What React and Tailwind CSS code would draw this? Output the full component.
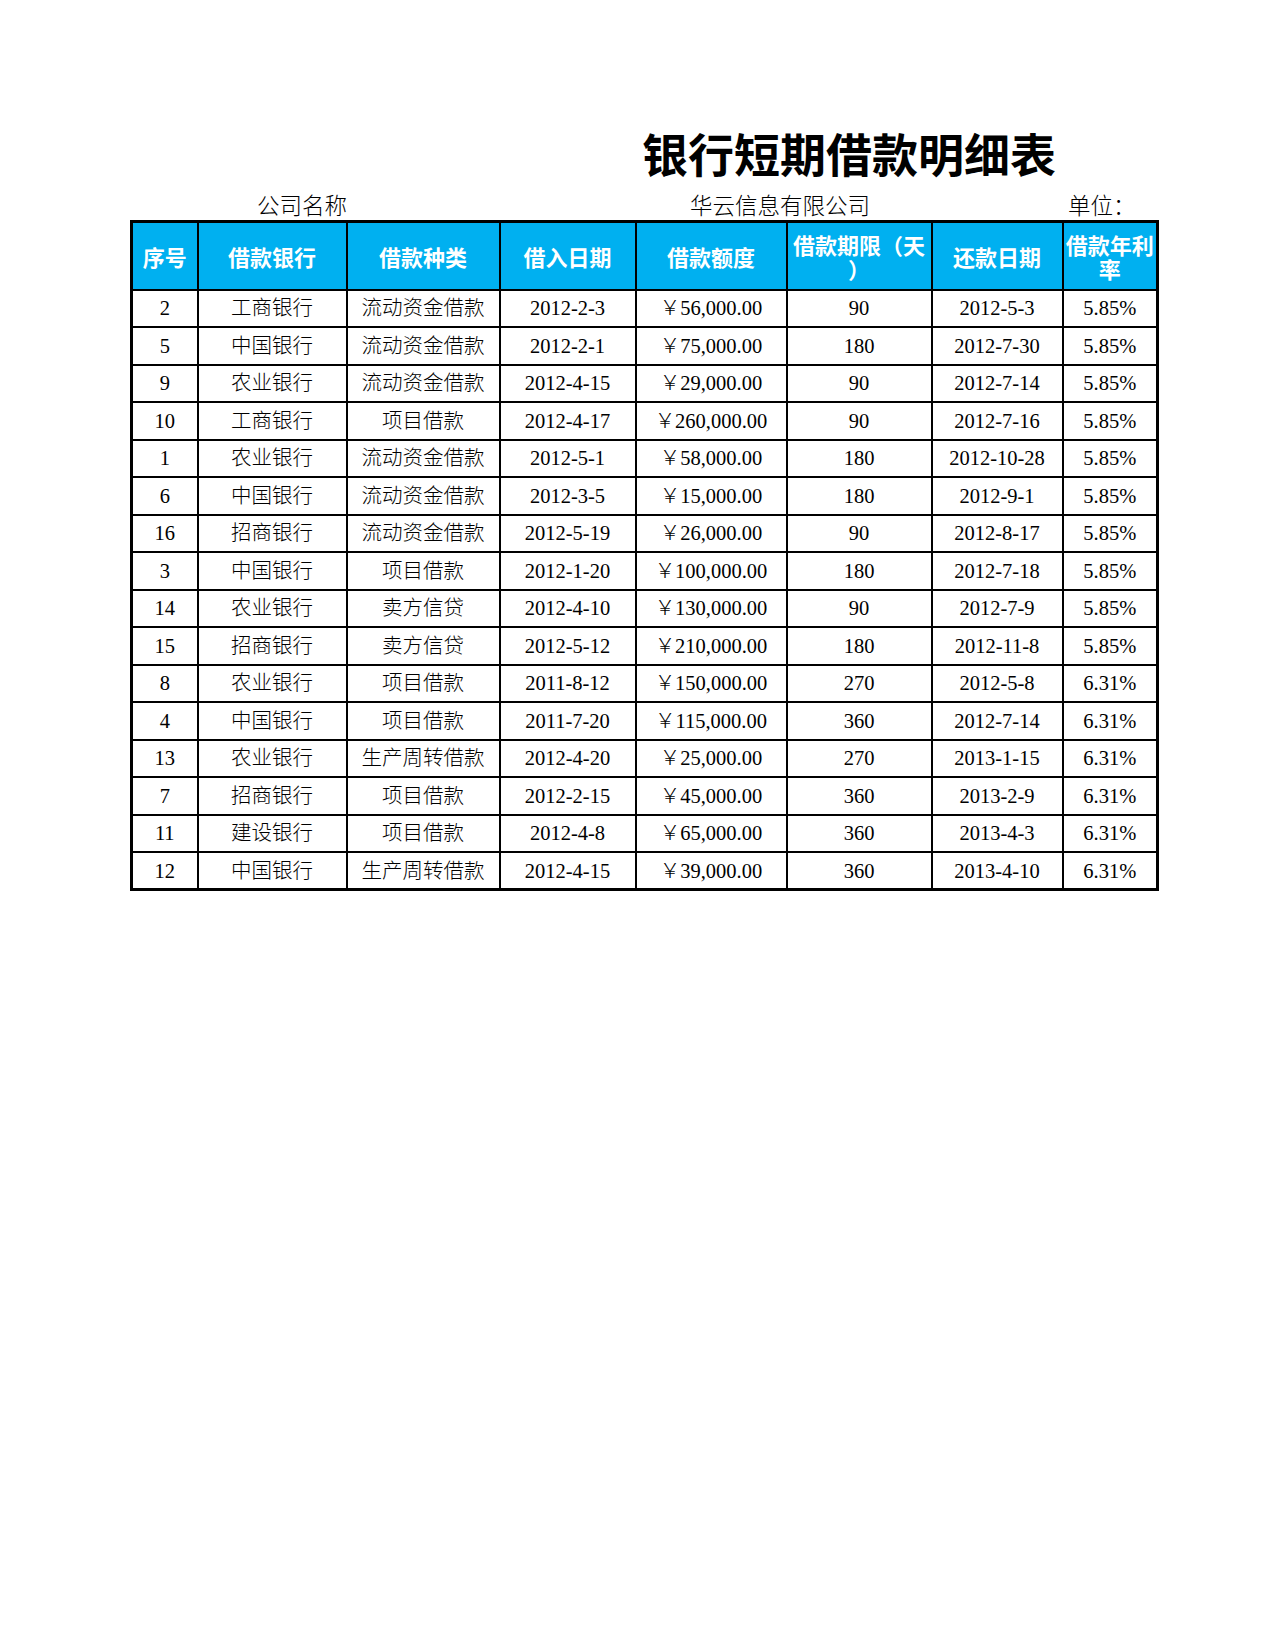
const rows = [
  ['2', '工商银行', '流动资金借款', '2012-2-3', '￥56,000.00', '90', '2012-5-3', '5.85%'],
  ['5', '中国银行', '流动资金借款', '2012-2-1', '￥75,000.00', '180', '2012-7-30', '5.85%'],
  ['9', '农业银行', '流动资金借款', '2012-4-15', '￥29,000.00', '90', '2012-7-14', '5.85%'],
  ['10', '工商银行', '项目借款', '2012-4-17', '￥260,000.00', '90', '2012-7-16', '5.85%'],
  ['1', '农业银行', '流动资金借款', '2012-5-1', '￥58,000.00', '180', '2012-10-28', '5.85%'],
  ['6', '中国银行', '流动资金借款', '2012-3-5', '￥15,000.00', '180', '2012-9-1', '5.85%'],
  ['16', '招商银行', '流动资金借款', '2012-5-19', '￥26,000.00', '90', '2012-8-17', '5.85%'],
  ['3', '中国银行', '项目借款', '2012-1-20', '￥100,000.00', '180', '2012-7-18', '5.85%'],
  ['14', '农业银行', '卖方信贷', '2012-4-10', '￥130,000.00', '90', '2012-7-9', '5.85%'],
  ['15', '招商银行', '卖方信贷', '2012-5-12', '￥210,000.00', '180', '2012-11-8', '5.85%'],
  ['8', '农业银行', '项目借款', '2011-8-12', '￥150,000.00', '270', '2012-5-8', '6.31%'],
  ['4', '中国银行', '项目借款', '2011-7-20', '￥115,000.00', '360', '2012-7-14', '6.31%'],
  ['13', '农业银行', '生产周转借款', '2012-4-20', '￥25,000.00', '270', '2013-1-15', '6.31%'],
  ['7', '招商银行', '项目借款', '2012-2-15', '￥45,000.00', '360', '2013-2-9', '6.31%'],
  ['11', '建设银行', '项目借款', '2012-4-8', '￥65,000.00', '360', '2013-4-3', '6.31%'],
  ['12', '中国银行', '生产周转借款', '2012-4-15', '￥39,000.00', '360', '2013-4-10', '6.31%'],
];

const serif = { fontFamily: '"Liberation Serif", "Noto Sans CJK SC", serif' };
const sans = { fontFamily: '"Noto Sans CJK SC", "Liberation Sans", sans-serif' };

export default function App() {
  return (
    <div className="w-[1275px] h-[1650px] bg-white text-black">
      <div className="ml-[130px] w-[1026px] pt-[129px]">
        {/* title */}
        <div className="pl-[512px] h-[46px] text-[46px] leading-[46px] font-bold whitespace-nowrap" style={sans}>
          银行短期借款明细表
        </div>

        {/* company row */}
        <div className="flex mt-[16px] mb-[3px] h-[26px] text-[22.5px] leading-[26px] font-light whitespace-nowrap" style={sans}>
          <span className="ml-[127px]">公司名称</span>
          <span className="ml-[343px]">华云信息有限公司</span>
          <span className="ml-[198px]">单位：</span>
        </div>

        <table className="table-fixed w-[1026px] border-collapse border-[3px] border-black">
          <colgroup>
            <col className="w-[66px]" />
            <col className="w-[149px]" />
            <col className="w-[153px]" />
            <col className="w-[136px]" />
            <col className="w-[151px]" />
            <col className="w-[145px]" />
            <col className="w-[131px]" />
            <col className="w-[95px]" />
          </colgroup>
          <thead>
            <tr className="h-[68px] bg-[#00b0f0] text-white text-[22px] leading-[24px] font-bold" style={sans}>
              <th className="border-2 border-black p-0 text-center">序号</th>
              <th className="border-2 border-black p-0 text-center">借款银行</th>
              <th className="border-2 border-black p-0 text-center">借款种类</th>
              <th className="border-2 border-black p-0 text-center">借入日期</th>
              <th className="border-2 border-black p-0 text-center">借款额度</th>
              <th className="border-2 border-black p-0 text-center whitespace-nowrap">
                借款期限（天<br />）
              </th>
              <th className="border-2 border-black p-0 text-center">还款日期</th>
              <th className="border-2 border-black p-0 text-center whitespace-nowrap">
                借款年利<br />率
              </th>
            </tr>
          </thead>
          <tbody>
            {rows.map((r, i) => (
              <tr key={i} className="h-[37.5px] text-[20.5px] leading-[24px]" style={serif}>
                {r.map((c, j) => (
                  <td key={j} className="border-2 border-black p-0 text-center whitespace-nowrap font-light">
                    {c}
                  </td>
                ))}
              </tr>
            ))}
          </tbody>
        </table>
      </div>
    </div>
  );
}
